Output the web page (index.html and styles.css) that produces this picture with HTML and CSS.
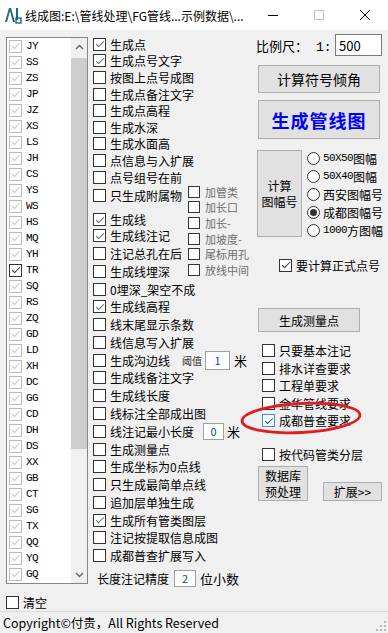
FILE: index.html
```html
<!DOCTYPE html>
<html lang="zh-CN">
<head>
    <meta charset="UTF-8">
    <title>线成图</title>
    <link rel="stylesheet" href="styles.css">
</head>
<body>
    <div class="titlebar">
        <svg class="appicon" width="18" height="18" viewBox="0 0 18 18">
            <path d="M1 16 L5 2 L7 2 L11 16 L9 16 L6 5 L3 16 Z" fill="#1d6b6b"/>
            <rect x="12" y="2" width="2" height="12" fill="#1d6b6b"/>
            <rect x="12" y="12" width="5" height="5" fill="none" stroke="#1d6b6b" stroke-width="1.4"/>
        </svg>
        <span class="title">线成图:E:\管线处理\FG管线...示例数据\...</span>
        <span class="winbtn">
            <svg width="10" height="10" viewBox="0 0 10 10"><line x1="0" y1="5.5" x2="10" y2="5.5" stroke="#000" stroke-width="1"/></svg>
        </span>
        <span class="winbtn">
            <svg width="10" height="10" viewBox="0 0 10 10"><rect x="0.5" y="0.5" width="9" height="9" fill="none" stroke="#c4c4c4" stroke-width="1"/></svg>
        </span>
        <span class="winbtn">
            <svg width="10" height="10" viewBox="0 0 10 10"><path d="M0 0 L10 10 M10 0 L0 10" stroke="#000" stroke-width="1"/></svg>
        </span>
    </div>

    <div class="main">
        <div class="leftcol">
            <div class="listbox">
                <div class="items">
                    <div class="item"><span class="cb on dis"></span>JY</div>
                    <div class="item"><span class="cb on dis"></span>SS</div>
                    <div class="item"><span class="cb on dis"></span>ZS</div>
                    <div class="item"><span class="cb on dis"></span>JP</div>
                    <div class="item"><span class="cb on dis"></span>JZ</div>
                    <div class="item"><span class="cb on dis"></span>XS</div>
                    <div class="item"><span class="cb on dis"></span>LS</div>
                    <div class="item"><span class="cb on dis"></span>JH</div>
                    <div class="item"><span class="cb on dis"></span>CS</div>
                    <div class="item"><span class="cb on dis"></span>YS</div>
                    <div class="item"><span class="cb on dis"></span>WS</div>
                    <div class="item"><span class="cb on dis"></span>HS</div>
                    <div class="item"><span class="cb on dis"></span>MQ</div>
                    <div class="item"><span class="cb on dis"></span>YH</div>
                    <div class="item"><span class="cb on"></span>TR</div>
                    <div class="item"><span class="cb on dis"></span>SQ</div>
                    <div class="item"><span class="cb on dis"></span>RS</div>
                    <div class="item"><span class="cb on dis"></span>ZQ</div>
                    <div class="item"><span class="cb on dis"></span>GD</div>
                    <div class="item"><span class="cb on dis"></span>LD</div>
                    <div class="item"><span class="cb on dis"></span>XH</div>
                    <div class="item"><span class="cb on dis"></span>DC</div>
                    <div class="item"><span class="cb on dis"></span>GG</div>
                    <div class="item"><span class="cb on dis"></span>CD</div>
                    <div class="item"><span class="cb on dis"></span>DH</div>
                    <div class="item"><span class="cb on dis"></span>DS</div>
                    <div class="item"><span class="cb on dis"></span>XX</div>
                    <div class="item"><span class="cb on dis"></span>GB</div>
                    <div class="item"><span class="cb on dis"></span>CT</div>
                    <div class="item"><span class="cb on dis"></span>SG</div>
                    <div class="item"><span class="cb on dis"></span>TX</div>
                    <div class="item"><span class="cb on dis"></span>QQ</div>
                    <div class="item"><span class="cb on dis"></span>YQ</div>
                    <div class="item"><span class="cb on dis"></span>GQ</div>
                </div>
                <div class="scrollbar">
                    <div class="arrow">
                        <svg width="9" height="6" viewBox="0 0 9 6"><polyline points="1,5 4.5,1.5 8,5" fill="none" stroke="#606060" stroke-width="1.3"/></svg>
                    </div>
                    <div class="thumb"></div>
                    <div class="track"></div>
                    <div class="arrow">
                        <svg width="9" height="6" viewBox="0 0 9 6"><polyline points="1,1 4.5,4.5 8,1" fill="none" stroke="#606060" stroke-width="1.3"/></svg>
                    </div>
                </div>
            </div>
            <div class="clearrow"><span class="cb"></span>清空</div>
        </div>

        <div class="midcol">
            <div class="mrow"><span class="cb on gray"></span>生成点</div>
            <div class="mrow"><span class="cb on gray"></span>生成点号文字</div>
            <div class="mrow"><span class="cb"></span>按图上点号成图</div>
            <div class="mrow"><span class="cb"></span>生成点备注文字</div>
            <div class="mrow"><span class="cb"></span>生成点高程</div>
            <div class="mrow"><span class="cb"></span>生成水深</div>
            <div class="mrow"><span class="cb"></span>生成水面高</div>
            <div class="mrow"><span class="cb"></span>点信息与入扩展</div>
            <div class="mrow"><span class="cb"></span>点号组号在前</div>

            <div class="block">
                <div class="blockleft">
                    <div class="mrow fushu"><span class="cb"></span>只生成附属物</div>
                    <div class="mrow xian"><span class="cb on gray"></span>生成线</div>
                    <div class="mrow b"><span class="cb on gray"></span>生成线注记</div>
                    <div class="mrow b"><span class="cb"></span>注记总孔在后</div>
                    <div class="mrow b"><span class="cb"></span>生成线埋深</div>
                </div>
                <div class="side">
                    <div class="srow"><span class="cb sm"></span>加管类</div>
                    <div class="srow"><span class="cb sm"></span>加长口</div>
                    <div class="srow"><span class="cb sm"></span>加长-</div>
                    <div class="srow"><span class="cb sm"></span>加坡度-</div>
                    <div class="srow"><span class="cb sm"></span>尾标用孔</div>
                    <div class="srow"><span class="cb sm"></span>放线中间</div>
                </div>
            </div>

            <div class="mrow b"><span class="cb"></span>0埋深_架空不成</div>
            <div class="mrow b"><span class="cb on gray"></span>生成线高程</div>
            <div class="mrow b"><span class="cb"></span>线末尾显示条数</div>
            <div class="mrow b"><span class="cb"></span>线信息写入扩展</div>
            <div class="mrow b"><span class="cb"></span>生成沟边线<span class="small">阈值</span><span class="field f1">1</span><span class="unit">米</span></div>
            <div class="mrow b"><span class="cb"></span>生成线备注文字</div>
            <div class="mrow b"><span class="cb"></span>生成线长度</div>
            <div class="mrow b"><span class="cb"></span>线标注全部成出图</div>
            <div class="mrow b"><span class="cb"></span>线注记最小长度<span class="field f0">0</span><span class="unit u0">米</span></div>
            <div class="mrow b"><span class="cb"></span>生成测量点</div>
            <div class="mrow b"><span class="cb"></span>生成坐标为0点线</div>
            <div class="mrow b"><span class="cb"></span>只生成最简单点线</div>
            <div class="mrow b"><span class="cb"></span>追加层单独生成</div>
            <div class="mrow b"><span class="cb on gray"></span>生成所有管类图层</div>
            <div class="mrow b"><span class="cb"></span>注记按提取信息成图</div>
            <div class="mrow b"><span class="cb"></span>成都普查扩展写入</div>
            <div class="precision">长度注记精度<span class="field f2">2</span><span class="unit">位小数</span></div>
        </div>

        <div class="rightcol">
            <div class="scale">
                <span>比例尺：<span class="scalenum">1:</span></span>
                <span class="scaleinput">500</span>
            </div>
            <div class="btn angle">计算符号倾角</div>
            <div class="btn draw">生成管线图</div>

            <div class="tufu">
                <div class="btn tufubtn">计算<br>图幅号</div>
                <div class="radios">
                    <div class="rrow"><span class="rd"></span><span class="mono">50X50</span>图幅</div>
                    <div class="rrow"><span class="rd"></span><span class="mono">50X40</span>图幅</div>
                    <div class="rrow"><span class="rd"></span>西安图幅号</div>
                    <div class="rrow"><span class="rd on"></span>成都图幅号</div>
                    <div class="rrow"><span class="rd"></span><span class="mono">1000</span>方图幅</div>
                </div>
            </div>

            <div class="formal"><span class="cb on"></span>要计算正式点号</div>
            <div class="btn survey">生成测量点</div>

            <div class="reqs">
                <div class="rq"><span class="cb"></span>只要基本注记</div>
                <div class="rq"><span class="cb"></span>排水详查要求</div>
                <div class="rq"><span class="cb"></span>工程单要求</div>
                <div class="rq"><span class="cb"></span>金华管线要求</div>
                <div class="rq"><span class="cb on blue"></span>成都普查要求</div>
            </div>
            <div class="rq layer"><span class="cb"></span>按代码管类分层</div>

            <div class="bottombtns">
                <div class="btn dbbtn">数据库<br>预处理</div>
                <div class="btn extbtn">扩展&gt;&gt;</div>
            </div>
        </div>
    </div>

    <div class="status">
        <span>Copyright©付贵，All Rights Reserved</span>
        <svg class="grip" width="10" height="10" viewBox="0 0 10 10">
            <rect x="8" y="0" width="2" height="2" fill="#b8b8b8"/>
            <rect x="4" y="4" width="2" height="2" fill="#b8b8b8"/>
            <rect x="8" y="4" width="2" height="2" fill="#b8b8b8"/>
            <rect x="0" y="8" width="2" height="2" fill="#b8b8b8"/>
            <rect x="4" y="8" width="2" height="2" fill="#b8b8b8"/>
            <rect x="8" y="8" width="2" height="2" fill="#b8b8b8"/>
        </svg>
    </div>

    <!-- red mark drawn over the dialog -->
    <svg class="mark" width="130" height="40" viewBox="0 0 130 40">
        <ellipse cx="63" cy="20" rx="59" ry="14.5" fill="none" stroke="#e31b23" stroke-width="2.8" transform="rotate(-3 63 20)"/>
    </svg>
</body>
</html>
```

FILE: styles.css
```css
body {
    margin: 0;
    width: 388px;
    height: 633px;
    background: #f0f0f0;
    font-family: "Noto Sans CJK SC", sans-serif;
    font-size: 12px;
    color: #000;
    position: relative;
    overflow: hidden;
}
.titlebar {
    height: 30px;
    background: #fff;
    display: flex;
    align-items: center;
}
.appicon {
    margin-left: 4px;
    margin-right: 3px;
}
.title {
    font-size: 12px;
    flex: 1;
    white-space: nowrap;
}
.winbtn {
    width: 46px;
    height: 30px;
    display: flex;
    align-items: center;
    justify-content: center;
}
.main {
    height: 581px;
    box-sizing: border-box;
    padding: 4px 0 0 6px;
    display: flex;
}
.leftcol {
    width: 82px;
}
.listbox {
    margin-top: 3px;
    height: 547px;
    box-sizing: border-box;
    border: 1px solid #828790;
    background: #fff;
    display: flex;
}
.items {
    width: 64px;
    overflow: hidden;
}
.item {
    height: 16px;
    display: flex;
    align-items: center;
    padding-left: 2px;
    font-family: "Liberation Mono", monospace;
    font-size: 11px;
    letter-spacing: -0.6px;
}
.item .cb {
    margin-right: 4px;
}
.scrollbar {
    width: 16px;
    display: flex;
    flex-direction: column;
    background: #f0f0f0;
}
.arrow {
    height: 17px;
    display: flex;
    align-items: center;
    justify-content: center;
}
.thumb {
    height: 391px;
    margin-top: 3px;
    background: #cdcdcd;
}
.track {
    flex: 1;
}
.clearrow {
    margin-top: 10px;
    height: 16px;
    display: flex;
    align-items: center;
}
.clearrow .cb {
    margin-right: 4px;
}

/* checkboxes and radios */
.cb {
    width: 13px;
    height: 13px;
    box-sizing: border-box;
    border: 1px solid #333;
    background: #fff;
    position: relative;
    flex: none;
}
.cb.on::after {
    content: "";
    position: absolute;
    left: 3.5px;
    top: 0.5px;
    width: 3px;
    height: 7px;
    border: solid #333;
    border-width: 0 1.2px 1.2px 0;
    transform: rotate(45deg);
}
.cb.gray::after {
    border-color: #6a6a6a;
}
.cb.dis {
    border-color: #bcbcbc;
}
.cb.dis::after {
    border-color: #c4c4c4;
}
.cb.blue {
    border-color: #3c8fd9;
}
.cb.blue::after {
    border-color: #0063b1;
}
.cb.sm {
    width: 12px;
    height: 12px;
    margin-right: 5px;
}
.rd {
    width: 13px;
    height: 13px;
    box-sizing: border-box;
    border: 1px solid #333;
    border-radius: 50%;
    background: #fff;
    position: relative;
    flex: none;
    margin-right: 3px;
}
.rd.on::after {
    content: "";
    position: absolute;
    left: 2px;
    top: 2px;
    width: 7px;
    height: 7px;
    border-radius: 50%;
    background: #333;
}
.mono {
    font-family: "Liberation Mono", monospace;
    font-size: 11px;
    letter-spacing: -0.6px;
}
.scalenum {
    font-family: "Liberation Mono", monospace;
    font-size: 13px;
    margin-left: 8px;
}

/* middle column */
.midcol {
    width: 160px;
    margin-left: 5px;
    padding-top: 2px;
}
.mrow {
    height: 16.6px;
    display: flex;
    align-items: center;
    white-space: nowrap;
}
.mrow .cb {
    margin-right: 4px;
}
.mrow.b {
    height: 17.78px;
}
.block {
    display: flex;
}
.blockleft {
    width: 95px;
}
.mrow.fushu {
    margin-top: 1px;
    height: 18px;
}
.mrow.xian {
    margin-top: 8.6px;
    height: 14px;
}
.side {
    margin-top: -1.5px;
}
.srow {
    height: 15.7px;
    display: flex;
    align-items: center;
    font-size: 11px;
    color: #6d6d6d;
    white-space: nowrap;
}
.small {
    font-size: 10px;
    color: #333;
    margin-left: 12px;
}
.field {
    background: #fff;
    border: 1px solid #a0a0a0;
    box-sizing: border-box;
    display: flex;
    align-items: center;
    justify-content: center;
    font-size: 11px;
    color: #1a3d8c;
}
.f1 {
    width: 25px;
    height: 19px;
    margin-left: 3px;
}
.f0 {
    width: 21px;
    height: 17px;
    margin-left: 9px;
}
.f2 {
    width: 22px;
    height: 17px;
    margin-left: 5px;
}
.unit {
    margin-left: 4px;
    font-size: 13px;
}
.unit.u0 {
    margin-left: 3px;
}
.precision {
    margin-top: 3px;
    height: 22px;
    padding-left: 4px;
    display: flex;
    align-items: center;
    white-space: nowrap;
}

/* right column */
.rightcol {
    width: 127px;
    margin-left: 3px;
}
.scale {
    height: 22px;
    display: flex;
    align-items: center;
    justify-content: space-between;
    font-size: 13px;
    padding-right: 1px;
}
.scaleinput {
    width: 47px;
    height: 22px;
    box-sizing: border-box;
    border: 1px solid #7a7a7a;
    background: #fff;
    padding-left: 3px;
    display: flex;
    align-items: center;
    font-size: 13px;
}
.btn {
    background: #e1e1e1;
    border: 1px solid #adadad;
    box-sizing: border-box;
    display: flex;
    align-items: center;
    justify-content: center;
    text-align: center;
}
.angle {
    margin: 9px 0 0 2px;
    width: 122px;
    height: 28px;
    font-size: 14px;
}
.draw {
    margin: 7px 0 0 2px;
    width: 122px;
    height: 39px;
    font-size: 18px;
    font-weight: bold;
    color: #0000ff;
    letter-spacing: 1px;
}
.tufu {
    margin-top: 11px;
    display: flex;
}
.tufubtn {
    margin-left: 1px;
    width: 48px;
    height: 87px;
    font-size: 12px;
    line-height: 16px;
}
.radios {
    margin: -1px 0 0 5px;
}
.rrow {
    height: 18px;
    display: flex;
    align-items: center;
    white-space: nowrap;
}
.formal {
    margin-top: 18px;
    height: 16px;
    padding-left: 23px;
    display: flex;
    align-items: center;
}
.formal .cb {
    margin-right: 4px;
}
.survey {
    margin: 35px 0 0 2px;
    width: 102px;
    height: 24px;
}
.reqs {
    margin-top: 9.75px;
}
.rq {
    height: 17.5px;
    padding-left: 6px;
    display: flex;
    align-items: center;
    white-space: nowrap;
}
.rq .cb {
    margin-right: 4px;
}
.rq.layer {
    margin-top: 16px;
}
.bottombtns {
    margin-top: 3.25px;
    display: flex;
    align-items: flex-end;
}
.dbbtn {
    margin-left: 2px;
    width: 50px;
    height: 35px;
    line-height: 16px;
}
.extbtn {
    margin-left: 15px;
    width: 59px;
    height: 19px;
}
.status {
    height: 22px;
    box-sizing: border-box;
    border-top: 1px solid #dadada;
    padding: 0 2px 0 3px;
    display: flex;
    align-items: center;
    justify-content: space-between;
    font-size: 12.5px;
}
.grip {
    align-self: flex-end;
    margin-bottom: 2px;
}
.mark {
    position: absolute;
    left: 238px;
    top: 398px;
}
```
